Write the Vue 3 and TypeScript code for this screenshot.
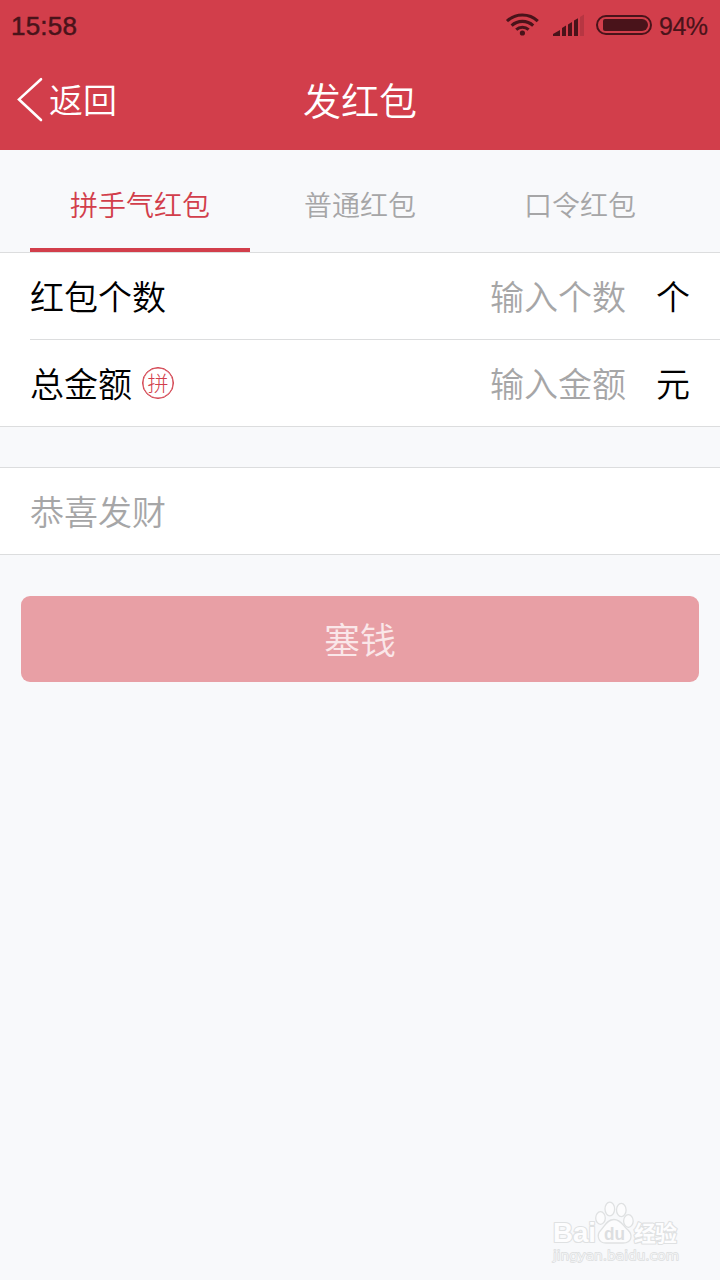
<script setup lang="ts">
import { ref } from 'vue'

interface Tab { id: string; label: string }
interface Field { id: string; label: string; hint: string; unit: string; badge?: string }

const tabs: Tab[] = [
  { id: 'lucky', label: '拼手气红包' },
  { id: 'normal', label: '普通红包' },
  { id: 'password', label: '口令红包' },
]
const fields: Field[] = [
  { id: 'count', label: '红包个数', hint: '输入个数', unit: '个' },
  { id: 'amount', label: '总金额', hint: '输入金额', unit: '元', badge: '拼' },
]
const active = ref('lucky')
const values = ref<Record<string, string>>({ count: '', amount: '' })
const greeting = ref('')
</script>

<template>
  <div class="screen">
    <header class="top">
      <div class="status">
        <span class="clock">15:58</span>
        <div class="indicators">
          <svg class="wifi" width="34" height="24" viewBox="0 0 34 24" fill="none" stroke="#49131a" stroke-width="3.1">
            <path d="M2 9.1 A22.6 22.6 0 0 1 32.8 9.1" />
            <path d="M6.6 13.6 A16 16 0 0 1 28.2 13.6" />
            <path d="M11.2 17.6 A9.4 9.4 0 0 1 23.6 17.6" />
            <circle cx="17.4" cy="21" r="2.6" fill="#49131a" stroke="none" />
          </svg>
          <svg class="signal" width="31" height="22" viewBox="0 0 31 22" fill="#49131a">
            <path d="M0 22V20L7 16V22Z" />
            <path d="M9 22V14L13 11.6V22Z" />
            <path d="M15 22V10.4L19 8V22Z" />
            <path d="M21 22V6.6L25 4.2V22Z" />
            <path d="M27 22V3L31 .6V22Z" fill="#b73642" />
          </svg>
          <span class="battery"><span class="charge"></span></span>
          <span class="percent">94%</span>
        </div>
      </div>
      <div class="nav">
        <button class="back" type="button">
          <svg width="28" height="46" viewBox="0 0 28 46" fill="none" stroke="#fff" stroke-width="2.6" stroke-linecap="round">
            <path d="M25 2.2L3 22.4L25 43" />
          </svg>
          <span>返回</span>
        </button>
        <h1>发红包</h1>
      </div>
    </header>

    <nav class="tabs">
      <button
        v-for="tab in tabs"
        :key="tab.id"
        type="button"
        class="tab"
        :class="{ active: tab.id === active }"
        @click="active = tab.id"
      >{{ tab.label }}</button>
    </nav>

    <section class="group">
      <label v-for="field in fields" :key="field.id" class="row">
        <span class="name">{{ field.label }}</span>
        <span v-if="field.badge" class="badge">{{ field.badge }}</span>
        <input v-model="values[field.id]" class="value" :placeholder="field.hint" />
        <span class="unit">{{ field.unit }}</span>
      </label>
    </section>

    <section class="message">
      <input v-model="greeting" placeholder="恭喜发财" />
    </section>

    <button class="submit" type="button">塞钱</button>

    <svg class="mark" width="136" height="68" viewBox="0 0 136 68">
      <g fill="#fdfdfe" stroke="#dfe1e2" stroke-width="2.2" stroke-linejoin="round" paint-order="stroke">
        <text x="3" y="42.5" font-size="28" font-weight="700" textLength="43" lengthAdjust="spacingAndGlyphs">Bai</text>
        <text x="84" y="41.5" font-size="22" font-weight="700" textLength="43" class="cjk">经验</text>
        <text x="3" y="60.5" font-size="12.5" stroke-width="1.8" textLength="126" lengthAdjust="spacingAndGlyphs" class="site">jingyan.baidu.com</text>
      </g>
      <g fill="#fcfcfd" stroke="#dfe1e2" stroke-width="1.3">
        <ellipse cx="50.5" cy="19" rx="4.8" ry="6.3" />
        <ellipse cx="59.8" cy="10" rx="4.8" ry="6.8" />
        <ellipse cx="71.3" cy="11" rx="4.8" ry="6.7" />
        <ellipse cx="78.4" cy="22" rx="4.8" ry="6.3" />
        <path d="M64 20.5C57 20.5 55 27 51 31C46 36 48 44 56 44H73C82 44 83 36 78 31C73 27 71 20.5 64 20.5Z" />
      </g>
      <text x="54" y="40.5" font-size="19" font-weight="700" fill="#dcdee0" textLength="21" lengthAdjust="spacingAndGlyphs">du</text>
    </svg>
  </div>
</template>

<style>
body { margin: 0; background: #f8f9fb; }
</style>

<style scoped>
.screen {
  position: relative;
  width: 720px;
  height: 1280px;
  overflow: hidden;
  background: #f8f9fb;
  font-family: "Noto Sans CJK SC", sans-serif;
  font-weight: 350;
}
.screen * { box-sizing: border-box; }
button, input {
  margin: 0;
  padding: 0;
  border: 0;
  outline: 0;
  background: none;
  font: inherit;
}
.top { height: 150px; background: #d23e4b; color: #fff; }
.status {
  display: flex;
  justify-content: space-between;
  height: 50px;
  padding: 0 12px 0 11px;
  color: #49131a;
  font-family: "Liberation Sans", sans-serif;
  font-size: 26px;
  font-weight: 400;
  line-height: 52px;
}
.clock { letter-spacing: .2px; -webkit-text-stroke: .5px #49131a; }
.percent { width: 49px; font-size: 25px; letter-spacing: -.5px; -webkit-text-stroke: .2px #49131a; }
.indicators { display: flex; align-items: flex-start; }
.wifi { margin: 12px 14px 0 0; }
.signal { margin: 14px 12px 0 0; }
.battery {
  width: 56px;
  height: 20px;
  margin: 15px 7px 0 0;
  padding: 2px;
  border: 2px solid #49131a;
  border-radius: 10px;
}
.charge {
  display: block;
  width: 45px;
  height: 12px;
  margin-left: 3px;
  border-radius: 2px 6px 6px 2px;
  background: #49131a;
}
.nav {
  display: grid;
  grid-template-columns: 1fr auto 1fr;
  align-items: center;
  height: 100px;
}
.back {
  display: flex;
  align-items: center;
  gap: 5px;
  padding-left: 16px;
  color: #fff;
  font-size: 34px;
  line-height: 50px;
}
.back span { padding-bottom: 2px; }
h1 { margin: 0; padding-bottom: 3px; font-size: 38px; font-weight: 350; line-height: 50px; }
.tabs {
  display: flex;
  height: 103px;
  padding: 0 30px;
  border-bottom: 1px solid #dcddde;
}
.tab {
  flex: 1;
  padding-top: 9px;
  border-bottom: 4px solid transparent;
  color: #a6a6a7;
  font-size: 28px;
}
.tab.active { border-color: #d23e4b; color: #d23e4b; }
.group { background: #fff; border-bottom: 1px solid #dcddde; }
.row {
  display: flex;
  align-items: center;
  height: 86px;
  padding: 0 30px;
  color: #000;
  font-size: 34px;
}
.name, .unit, .value { padding-bottom: 2px; }
.row + .row {
  height: 87px;
  margin-left: 30px;
  padding-left: 0;
  border-top: 1px solid #dcddde;
}
.badge {
  width: 32px;
  height: 32px;
  margin-left: 10px;
  border: 1px solid #d23e4b;
  border-radius: 50%;
  box-shadow: inset 0 0 0 .5px #d23e4b;
  color: #d23e4b;
  font-size: 21px;
  font-weight: 300;
  line-height: 28px;
  text-align: center;
}
.value { flex: 1; min-width: 0; text-align: right; }
.unit { margin-left: 30px; }
input::placeholder { color: #a6a6a7; opacity: 1; }
.message {
  height: 88px;
  margin-top: 40px;
  padding: 0 30px;
  border: solid #dcddde;
  border-width: 1px 0;
  background: #fff;
  font-size: 34px;
}
.message input { width: 100%; height: 100%; padding-bottom: 2px; }
.submit {
  display: block;
  width: 678px;
  height: 86px;
  margin: 41px auto 0;
  padding-bottom: 3px;
  border-radius: 9px;
  background: #e89fa5;
  color: #fae7e9;
  font-size: 36px;
}
.mark {
  position: absolute;
  left: 550px;
  top: 1199px;
  font-family: "Liberation Sans", sans-serif;
}
.cjk { font-family: "Noto Sans CJK SC", sans-serif; }
.site { font-family: "DejaVu Sans", sans-serif; }
</style>
